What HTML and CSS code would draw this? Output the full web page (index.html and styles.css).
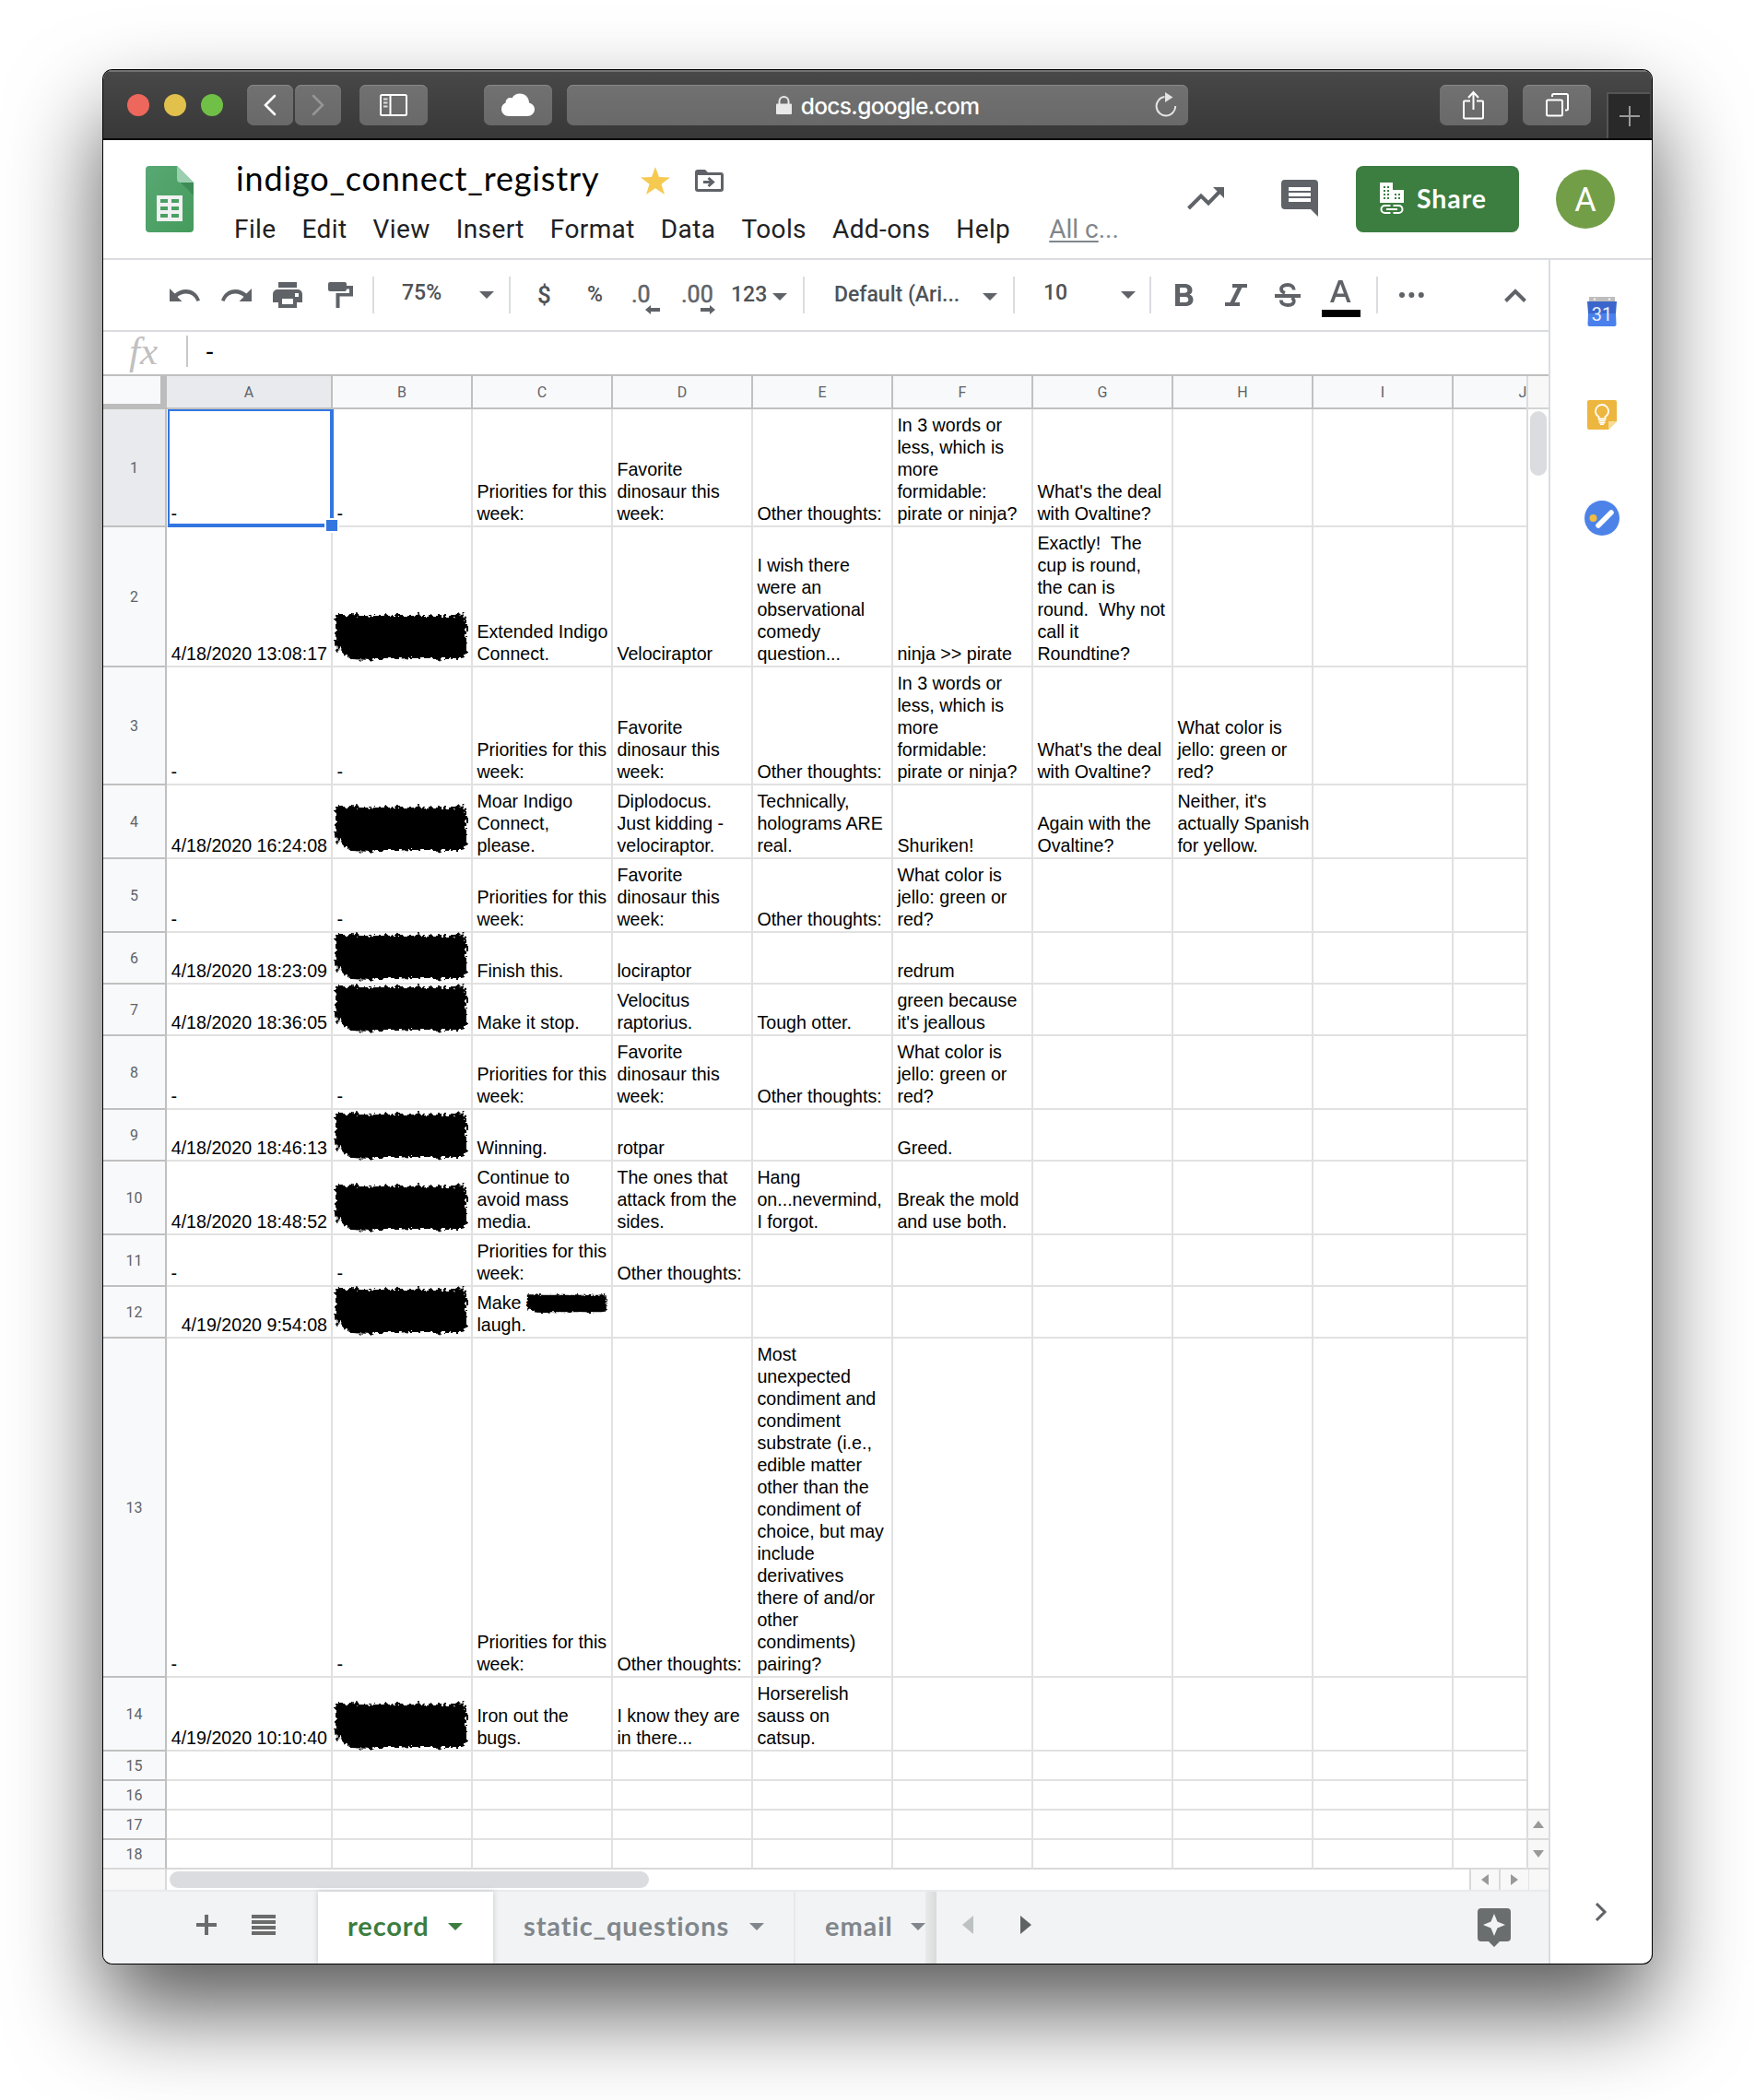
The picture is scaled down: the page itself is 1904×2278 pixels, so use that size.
FILE: index.html
```html
<!DOCTYPE html>
<html lang="en">
<head>
<meta charset="utf-8">
<title>indigo_connect_registry</title>
<link rel="stylesheet" href="styles.css">
</head>
<body>
<svg class="defs" width="0" height="0" aria-hidden="true">
  <defs>
    <filter id="rough" x="-5%" y="-15%" width="110%" height="130%">
      <feTurbulence type="fractalNoise" baseFrequency="0.22" numOctaves="2" seed="4" result="n"/>
      <feDisplacementMap in="SourceGraphic" in2="n" scale="9" xChannelSelector="R" yChannelSelector="G"/>
    </filter>
    <linearGradient id="leaf" x1="0" y1="0" x2="1" y2="1"><stop offset="0" stop-color="#58a873"/><stop offset="1" stop-color="#459b5c"/></linearGradient>
    <symbol id="scribble" viewBox="0 0 147 54">
      <path filter="url(#rough)" d="M3 3H21L25 1L29 4H54L59 2L62 4H88L92 2L96 4H132L143 1L141 7L145 5V47L140 50H118L114 52L108 50H84L80 52L74 50H46L42 52L20 51L12 46L10 41L7 39L4 47L3 30Z"/>
    </symbol>
  </defs>
</svg>
<div class="window">
  <div class="titlebar">
    <div class="lights"><i class="red"></i><i class="yellow"></i><i class="green"></i></div>
    <div class="tb nav"><svg width="50" height="44" viewBox="0 0 50 44"><path d="M30 12L20 22L30 32" fill="none" stroke="#fff" stroke-width="2.6" stroke-linecap="round"/></svg></div>
    <div class="tb nav next"><svg width="50" height="44" viewBox="0 0 50 44"><path d="M20 12L30 22L20 32" fill="none" stroke="#969696" stroke-width="2.6" stroke-linecap="round"/></svg></div>
    <div class="tb side"><svg width="30" height="24" viewBox="0 0 30 24" fill="none" stroke="#fff" stroke-width="2"><rect x="1" y="1" width="28" height="22" rx="1.5"/><path d="M11.5 1V23"/><path d="M4 5.5H8.500M4 9.500H8.500M4 13.500H8.500" stroke="#ddd"/></svg></div>
    <div class="tb cloud"><svg width="36" height="26" viewBox="0 0 36 26" fill="#fff"><path d="M8 25C3.500 25 0 21.800 0 17.500C0 14 2 11.500 4.600 10.500C4.200 7 8 3.800 11.500 5.600C13.200 2 16.300 0.500 20 0.500C25.500 0.500 30 4.500 30 10.500C33.500 11.500 36 14 36 17.500C36 21.800 32.500 25 28 25Z"/></svg></div>
    <div class="tb url"><svg class="lock" width="18" height="20" viewBox="0 0 18 20"><rect y="8.500" width="17" height="11.500" rx="1" fill="#e9e9e9"/><path d="M3.500 9V6A5 5 0 0 1 13.500 6V9" fill="none" stroke="#e9e9e9" stroke-width="2"/></svg><span>docs.google.com</span><svg class="reload" width="24" height="28" viewBox="0 0 24 28"><path d="M10.500 5A10.300 10.300 0 1 0 22.200 15" fill="none" stroke="#e4e4e4" stroke-width="2"/><path d="M11 0L19.500 5.500L11 11Z" fill="#e4e4e4"/></svg></div>
    <div class="tb act share-out"><svg width="24" height="32" viewBox="0 0 24 32" fill="none" stroke="#fff" stroke-width="2"><path d="M8 11.500H2A1 1 0 0 0 1 12.500V29.500A1 1 0 0 0 2 30.500H21A1 1 0 0 0 22 29.500V12.500A1 1 0 0 0 21 11.500H15M11.500 21V2M6 8L11.500 2L17 8"/></svg></div>
    <div class="tb act pages"><svg width="25" height="26" viewBox="0 0 25 26" fill="none" stroke="#fff" stroke-width="2"><rect x="1" y="7.500" width="17" height="17" rx="1.500"/><path d="M7 4V2.500A1.500 1.500 0 0 1 8.500 1H22.500A1.500 1.500 0 0 1 24 2.500V17A1.500 1.500 0 0 1 22.500 18.500H21"/></svg></div>
    <div class="newtab"><svg width="24" height="24" viewBox="0 0 24 24" stroke="#9a9a9a" stroke-width="2"><path d="M12 1V23M1 12H23"/></svg></div>
  </div>

  <header class="header">
    <svg class="logo" width="52" height="72" viewBox="0 0 52 72"><path d="M4 0H34L52 18V68A4 4 0 0 1 48 72H4A4 4 0 0 1 0 68V4A4 4 0 0 1 4 0Z" fill="url(#leaf)"/><path d="M38 18L52 32V18Z" fill="#3d8b56"/><path d="M34 0L52 18H38A4 4 0 0 1 34 14Z" fill="#9ccfb0"/><path d="M12 32H40V60H12Z" fill="#f1f1f1"/><path d="M16 36H24V40H16ZM28 36H36V40H28ZM16 44H24V48H16ZM28 44H36V48H28ZM16 52H24V56H16ZM28 52H36V56H28Z" fill="#4a9f64"/></svg>
    <div class="doc">
      <div class="name"><span class="doc-title">indigo_connect_registry</span>
        <svg class="star" width="32" height="30" viewBox="0 0 32 30"><path d="M16 0L20 11L32 11.400L22.500 18.800L26 30L16 23.200L6 30L9.500 18.800L0 11.400L12 11Z" fill="#f6ca51"/></svg>
        <svg class="move" width="31" height="24" viewBox="0 0 31 24"><path fill-rule="evenodd" d="M3 0H11L14 3H28A3 3 0 0 1 31 6V21A3 3 0 0 1 28 24H3A3 3 0 0 1 0 21V3A3 3 0 0 1 3 0ZM3 6V21H28V6Z" fill="#5f6368"/><path d="M9 13.500H18M14.500 9L19.500 13.500L14.500 18" fill="none" stroke="#5f6368" stroke-width="3"/></svg>
      </div>
      <nav class="menu"><span>File</span><span>Edit</span><span>View</span><span>Insert</span><span>Format</span><span>Data</span><span>Tools</span><span>Add-ons</span><span>Help</span><span class="saved"><u>All c</u>...</span></nav>
    </div>
    <svg class="trend" width="40" height="25" viewBox="0 0 40 25"><path d="M1.500 23L15 9.500L23 17.500L36 4" fill="none" stroke="#5f6368" stroke-width="4"/><path d="M28 0H40V12Z" fill="#5f6368"/></svg>
    <svg class="comment" width="40" height="40" viewBox="0 0 40 40"><path d="M4 0H36A4 4 0 0 1 40 4V40L32 32H4A4 4 0 0 1 0 28V4A4 4 0 0 1 4 0Z" fill="#5f6368"/><path d="M8 10H32M8 16H32M8 22H32" stroke="#fff" stroke-width="4"/></svg>
    <button class="share"><svg width="26" height="34" viewBox="0 0 26 34"><path fill-rule="evenodd" d="M0 0H14V8H26V22H0ZM4 4V6H6V4ZM8 4V6H10V4ZM4 8V10H6V8ZM8 8V10H10V8ZM4 12V14H6V12ZM8 12V14H10V12ZM4 16V18H6V16ZM8 16V18H10V16ZM16 12V14H18V12ZM20 12V14H22V12ZM16 16V18H18V16ZM20 16V18H22V16Z" fill="#fff"/><path d="M11.500 25H5.500A4 4 0 0 0 5.500 33H11.500M14.500 25H20.500A4 4 0 0 1 20.500 33H14.500M7 29H19" fill="none" stroke="#fff" stroke-width="2"/></svg><span>Share</span></button>
    <div class="avatar">A</div>
  </header>

  <div class="body">
    <main class="main">
      <div class="toolbar">
        <svg width="33" height="14" viewBox="0 0 33 14"><path d="M0 0V14H13.500L8.500 9C12 6 17 4.500 21.500 6C25.500 7.200 28 10 29.500 14L33 12.700C31 7 27 3 22 1.500C16 0 10 1.800 5.600 5.600Z" fill="#5f6368"/></svg>
        <svg width="33" height="14" viewBox="0 0 33 14"><path transform="translate(33 0) scale(-1 1)" d="M0 0V14H13.500L8.500 9C12 6 17 4.500 21.500 6C25.500 7.200 28 10 29.500 14L33 12.700C31 7 27 3 22 1.500C16 0 10 1.800 5.600 5.600Z" fill="#5f6368"/></svg>
        <svg width="32" height="28" viewBox="0 0 32 28"><path fill-rule="evenodd" d="M6 0H26V6H6ZM5 8H27A5 5 0 0 1 32 13V22H26V28H6V22H0V13A5 5 0 0 1 5 8ZM10 18V24H22V18ZM24 12V16H28V12Z" fill="#5f6368"/></svg>
        <svg width="27" height="28" viewBox="0 0 27 28"><path d="M2 0H18A2 2 0 0 1 20 2V4H27V15.500H12.500V28H8.500V12H23V7.500H20V8A2 2 0 0 1 18 10H2A2 2 0 0 1 0 8V2A2 2 0 0 1 2 0Z" fill="#5f6368"/></svg>
        <i class="sep"></i>
        <span class="t up">75%</span>
        <i class="caret"></i>
        <i class="sep"></i>
        <span class="t big">$</span>
        <span class="t">%</span>
        <span class="t dec">.0<svg width="16" height="10" viewBox="0 0 16 10"><path d="M6 0V3H16V7H6V10L0 5Z" fill="#5f6368"/></svg></span>
        <span class="t dec two">.00<svg width="16" height="10" viewBox="0 0 16 10"><path d="M10 0V3H0V7H10V10L16 5Z" fill="#5f6368"/></svg></span>
        <span class="t num">123</span>
        <i class="caret low"></i>
        <i class="sep"></i>
        <span class="t">Default (Ari...</span>
        <i class="caret low"></i>
        <i class="sep"></i>
        <span class="t up">10</span>
        <i class="caret"></i>
        <i class="sep"></i>
        <svg width="20" height="24" viewBox="0 0 20 24"><path fill-rule="evenodd" d="M0 0H10C15 0 18.500 2.500 18.500 6.700C18.500 9 17.500 10.800 15.500 11.600C18 12.500 19.500 14.500 19.500 17C19.500 21.500 16 24 11 24H0ZM5 4V9.700H10C12 9.700 13.300 8.600 13.300 6.900C13.300 5 12 4 10 4ZM5 14V20H11C13 20 14.300 18.900 14.300 17C14.300 15.200 13 14 11 14Z" fill="#5f6368"/></svg>
        <svg width="24" height="24" viewBox="0 0 24 24"><path d="M8 0H24V4H18.500L10.500 20H16V24H0V20H5.500L13.500 4H8Z" fill="#5f6368"/></svg>
        <svg width="28" height="26" viewBox="0 0 28 26"><path d="M0 12H28V16H0Z" fill="#5f6368"/><path d="M20.800 7.500C20.800 4 18 2 14 2C9.500 2 7 4 7 6.500C7 8.500 8.500 10 11 10.800M18.500 16C20 17 20.800 18 20.800 19.500C20.800 22.500 18 24 14 24C9.500 24 6.800 22 6.800 18.500" fill="none" stroke="#5f6368" stroke-width="3.800"/></svg>
        <svg class="color" width="42" height="40" viewBox="0 0 42 40"><path fill-rule="evenodd" d="M18 0H22.500L31.500 24H27.500L25.300 18H15.200L13 24H9ZM16.500 14.500H24L20.250 4Z" fill="#5f6368"/><path d="M0 32H42V40H0Z" fill="#000"/></svg>
        <i class="sep"></i>
        <svg width="27" height="6" viewBox="0 0 27 6" fill="#5f6368"><circle cx="3" cy="3" r="3"/><circle cx="13.400" cy="3" r="3"/><circle cx="23.800" cy="3" r="3"/></svg>
        <svg width="24" height="15" viewBox="0 0 24 15"><path d="M1.500 13.500L12 3L22.500 13.500" fill="none" stroke="#5f6368" stroke-width="4"/></svg>
      </div>
      <div class="formula"><em>fx</em><i></i><span>-</span></div>

      <div class="grid-area">
        <div class="sheet">
          <table>
            <colgroup><col class="rh"><col class="ca"><col><col><col><col><col><col><col><col><col></colgroup>
            <thead><tr><th class="corner"></th><th class="on">A</th><th>B</th><th>C</th><th>D</th><th>E</th><th>F</th><th>G</th><th>H</th><th>I</th><th>J</th></tr></thead>
            <tbody>
            <tr class="l5"><th class="on">1</th><td class="sel">-<i class="ring"></i><i class="handle"></i></td><td>-</td><td>Priorities for this
week:</td><td>Favorite
dinosaur this
week:</td><td>Other thoughts:</td><td>In 3 words or
less, which is
more
formidable:
pirate or ninja?</td><td>What's the deal
with Ovaltine?</td><td></td><td></td><td></td></tr>
            <tr class="l6"><th>2</th><td class="r">4/18/2020 13:08:17</td><td><svg class="ink b3"><use href="#scribble"/></svg></td><td>Extended Indigo
Connect.</td><td>Velociraptor</td><td>I wish there
were an
observational
comedy
question...</td><td>ninja &gt;&gt; pirate</td><td>Exactly!  The
cup is round,
the can is
round.  Why not
call it
Roundtine?</td><td></td><td></td><td></td></tr>
            <tr class="l5"><th>3</th><td>-</td><td>-</td><td>Priorities for this
week:</td><td>Favorite
dinosaur this
week:</td><td>Other thoughts:</td><td>In 3 words or
less, which is
more
formidable:
pirate or ninja?</td><td>What's the deal
with Ovaltine?</td><td>What color is
jello: green or
red?</td><td></td><td></td></tr>
            <tr class="l3"><th>4</th><td class="r">4/18/2020 16:24:08</td><td><svg class="ink b3"><use href="#scribble"/></svg></td><td>Moar Indigo
Connect,
please.</td><td>Diplodocus.
Just kidding -
velociraptor.</td><td>Technically,
holograms ARE
real.</td><td>Shuriken!</td><td>Again with the
Ovaltine?</td><td>Neither, it's
actually Spanish
for yellow.</td><td></td><td></td></tr>
            <tr class="l3"><th>5</th><td>-</td><td>-</td><td>Priorities for this
week:</td><td>Favorite
dinosaur this
week:</td><td>Other thoughts:</td><td>What color is
jello: green or
red?</td><td></td><td></td><td></td><td></td></tr>
            <tr class="l2"><th>6</th><td class="r">4/18/2020 18:23:09</td><td><svg class="ink"><use href="#scribble"/></svg></td><td>Finish this.</td><td>lociraptor</td><td></td><td>redrum</td><td></td><td></td><td></td><td></td></tr>
            <tr class="l2"><th>7</th><td class="r">4/18/2020 18:36:05</td><td><svg class="ink"><use href="#scribble"/></svg></td><td>Make it stop.</td><td>Velocitus
raptorius.</td><td>Tough otter.</td><td>green because
it's jeallous</td><td></td><td></td><td></td><td></td></tr>
            <tr class="l3"><th>8</th><td>-</td><td>-</td><td>Priorities for this
week:</td><td>Favorite
dinosaur this
week:</td><td>Other thoughts:</td><td>What color is
jello: green or
red?</td><td></td><td></td><td></td><td></td></tr>
            <tr class="l2"><th>9</th><td class="r">4/18/2020 18:46:13</td><td><svg class="ink drop"><use href="#scribble"/></svg></td><td>Winning.</td><td>rotpar</td><td></td><td>Greed.</td><td></td><td></td><td></td><td></td></tr>
            <tr class="l3"><th>10</th><td class="r">4/18/2020 18:48:52</td><td><svg class="ink"><use href="#scribble"/></svg></td><td>Continue to
avoid mass
media.</td><td>The ones that
attack from the
sides.</td><td>Hang
on...nevermind,
I forgot.</td><td>Break the mold
and use both.</td><td></td><td></td><td></td><td></td></tr>
            <tr class="l2"><th>11</th><td>-</td><td>-</td><td>Priorities for this
week:</td><td>Other thoughts:</td><td></td><td></td><td></td><td></td><td></td><td></td></tr>
            <tr class="l2"><th>12</th><td class="r">4/19/2020 9:54:08</td><td><svg class="ink"><use href="#scribble"/></svg></td><td>Make c<svg class="ink word" viewBox="0 0 147 54" preserveAspectRatio="none"><use href="#scribble"/></svg>
laugh.</td><td></td><td></td><td></td><td></td><td></td><td></td><td></td></tr>
            <tr class="l15"><th>13</th><td>-</td><td>-</td><td>Priorities for this
week:</td><td>Other thoughts:</td><td>Most
unexpected
condiment and
condiment
substrate (i.e.,
edible matter
other than the
condiment of
choice, but may
include
derivatives
there of and/or
other
condiments)
pairing?</td><td></td><td></td><td></td><td></td><td></td></tr>
            <tr class="l3"><th>14</th><td class="r">4/19/2020 10:10:40</td><td><svg class="ink drop"><use href="#scribble"/></svg></td><td>Iron out the
bugs.</td><td>I know they are
in there...</td><td>Horserelish
sauss on
catsup.</td><td></td><td></td><td></td><td></td><td></td></tr>
            <tr><th>15</th><td></td><td></td><td></td><td></td><td></td><td></td><td></td><td></td><td></td><td></td></tr>
            <tr><th>16</th><td></td><td></td><td></td><td></td><td></td><td></td><td></td><td></td><td></td><td></td></tr>
            <tr><th>17</th><td></td><td></td><td></td><td></td><td></td><td></td><td></td><td></td><td></td><td></td></tr>
            <tr class="last"><th>18</th><td></td><td></td><td></td><td></td><td></td><td></td><td></td><td></td><td></td><td></td></tr>
            </tbody>
          </table>
        </div>
        <div class="vscroll"><div class="vhead"></div><div class="vthumb"></div>
          <div class="vbtn push"><svg width="12" height="8" viewBox="0 0 12 8"><path d="M6 0L12 8H0Z"/></svg></div>
          <div class="vbtn"><svg width="12" height="8" viewBox="0 0 12 8"><path d="M0 0H12L6 8Z"/></svg></div>
        </div>
      </div>
      <div class="hscroll"><div class="hcorner"></div><div class="hthumb"></div>
        <div class="hbtn push"><svg width="8" height="12" viewBox="0 0 8 12"><path d="M8 0V12L0 6Z"/></svg></div>
        <div class="hbtn"><svg width="8" height="12" viewBox="0 0 8 12"><path d="M0 0V12L8 6Z"/></svg></div>
        <div class="hend"></div>
      </div>
      <footer class="tabs">
        <div class="sheet-tools"><svg width="22" height="22" viewBox="0 0 22 22"><path d="M11 0V22M0 11H22" stroke="#6b6b6b" stroke-width="4"/></svg><svg width="26" height="24" viewBox="0 0 26 24"><path d="M0 3H26M0 9H26M0 15H26M0 21H26" stroke="#6b6b6b" stroke-width="4"/></svg></div>
        <div class="tab active"><span>record</span><i class="caret"></i></div>
        <div class="tab second"><span>static_questions</span><i class="caret"></i></div>
        <div class="tab third"><span>email</span><i class="caret"></i></div>
        <div class="fade"></div>
        <svg class="prev" width="12" height="20" viewBox="0 0 12 20"><path d="M12 0V20L0 10Z" fill="#bdc1c3"/></svg>
        <svg class="nxt" width="12" height="20" viewBox="0 0 12 20"><path d="M0 0V20L12 10Z" fill="#606363"/></svg>
        <svg class="explore" width="36" height="42" viewBox="0 0 36 42"><path d="M4 0H32A4 4 0 0 1 36 4V32A4 4 0 0 1 32 36H24L18 42L12 36H4A4 4 0 0 1 0 32V4A4 4 0 0 1 4 0Z" fill="#6b6e6e"/><path d="M18 6L21.500 14.500L30 18L21.500 21.500L18 30L14.500 21.500L6 18L14.500 14.500Z" fill="#f1f3f4"/></svg>
      </footer>
    </main>
    <aside class="panel">
      <svg class="cal" width="32" height="32" viewBox="0 0 32 32"><path d="M2 0H30V6H2Z" fill="#bdbdbd"/><circle cx="8" cy="2.500" r="1.300" fill="#eee"/><circle cx="24" cy="2.500" r="1.300" fill="#eee"/><path d="M0 5H32L31 18H1Z" fill="#3a66cb"/><path d="M1 18H31L31.500 30A2 2 0 0 1 29.500 32H2.500A2 2 0 0 1 .5 30Z" fill="#4a80ec"/><text x="16" y="25.500" text-anchor="middle">31</text></svg>
      <svg class="keep" width="32" height="32" viewBox="0 0 32 32"><path d="M2 0H30A2 2 0 0 1 32 2V23L23 32H2A2 2 0 0 1 0 30V2A2 2 0 0 1 2 0Z" fill="#edb63f"/><path d="M32 23L23 32V23Z" fill="#f8dc94"/><path d="M12.500 20.500V18C10 16.500 9 14.500 9 12A7 7 0 0 1 23 12C23 14.500 22 16.500 19.500 18V20.500Z" fill="none" stroke="#fff" stroke-width="1.800"/><path d="M12.500 22.500H19.500M12.500 24.500H19.500M14 26.200H18" stroke="#fff" stroke-width="1.500"/></svg>
      <svg class="tasks" width="38" height="38" viewBox="0 0 38 38"><circle cx="19" cy="19" r="19" fill="#4d83e8"/><circle cx="9.500" cy="19" r="4" fill="#f1bc42"/><path d="M15 27L29 13" stroke="#fff" stroke-width="5.500" stroke-linecap="round"/></svg>
      <svg class="chev" width="14" height="20" viewBox="0 0 14 20"><path d="M2 1L11 10L2 19" fill="none" stroke="#5f6368" stroke-width="3"/></svg>
    </aside>
  </div>
</div>
</body>
</html>
```
FILE: styles.css
```css
* { box-sizing: border-box; }
html, body { margin: 0; background: #fff; }
body { padding: 76px 112px 0; width: 1904px; height: 2278px; overflow: hidden; font-family: Roboto, sans-serif; }
svg { display: block; flex: none; }
.defs { position: absolute; }
.window { width: 1680px; height: 2054px; border-radius: 10px; background: #fff; overflow: hidden; display: flex; flex-direction: column;
  box-shadow: 0 0 0 1px #000, 0 50px 100px rgba(0,0,0,.66); }

/* browser chrome */
.titlebar { height: 76px; flex: none; display: flex; align-items: flex-start; padding: 14px 0 0 26px; background: linear-gradient(#484848, #383838); border-bottom: 2px solid #060606; box-shadow: inset 0 2px #727272; }
.lights { display: flex; gap: 16px; padding-top: 12px; width: 130px; flex: none; }
.lights i { width: 24px; height: 24px; border-radius: 50%; }
.red { background: #ee675c; }
.yellow { background: #e1c04c; }
.green { background: #70bf47; }
.tb { height: 44px; margin-top: 2px; flex: none; border-radius: 7px; background: linear-gradient(#717171, #696969); box-shadow: inset 0 1px #888; display: flex; align-items: center; justify-content: center; }
.nav { width: 50px; }
.next { margin-left: 2px; }
.side { width: 74px; margin-left: 20px; }
.cloud { width: 74px; margin-left: 61px; }
.url { width: 674px; margin-left: 16px; color: #fff; font: 500 24.5px Inter, sans-serif; letter-spacing: -.65px; gap: 9px; position: relative; }
.url span { padding-top: 2px; }
.reload { position: absolute; right: 12px; top: 8px; }
.act { width: 74px; }
.share-out { margin-left: 273px; }
.pages { margin-left: 16px; }
.newtab { margin: 10px 2px 0 17px; width: 47px; height: 50px; background: #292929; border: 2px solid #555; border-width: 2px 0 0 2px; display: flex; align-items: center; justify-content: center; }

/* document header */
.header { height: 130px; flex: none; display: flex; padding-left: 46px; border-bottom: 2px solid #dadce0; }
.logo { margin-top: 28px; }
.doc { width: 1078px; padding: 16px 0 0 44px; flex: none; }
.name { display: flex; height: 50px; }
.doc-title { font: 400 36px/50px Lato, sans-serif; width: 441px; padding-left: 2px; letter-spacing: .85px; color: #000; }
.star { margin-top: 13px; }
.move { margin: 16px 0 0 27px; }
.menu { display: flex; gap: 28px; font-size: 28px; line-height: 34px; margin-top: 14px; color: #202124; letter-spacing: .4px; white-space: nowrap; }
.saved { color: #80868b; padding-left: 14px; letter-spacing: 0; }
.saved u { text-decoration-thickness: 2px; text-underline-offset: 3px; }
.trend { margin-top: 51px; }
.comment { margin: 43px 0 0 62px; }
.share { margin: 28px 0 0 41px; width: 177px; height: 72px; border: 0; border-radius: 8px; background: #3c7d40; color: #fff; display: flex; align-items: center; padding: 0 0 2px 26px; gap: 14px; font: 700 28.5px Lato, sans-serif; letter-spacing: .9px; flex: none; }
.avatar { margin: 32px 0 0 40px; width: 64px; height: 64px; border-radius: 50%; background: #739e48; color: #fff; font-size: 36px; line-height: 66px; text-align: center; flex: none; }

.body { display: flex; flex: 1; min-height: 0; }
.main { width: 1568px; flex: none; display: flex; flex-direction: column; }
.panel { width: 112px; border-left: 2px solid #dadce0; display: flex; flex-direction: column; align-items: center; }
.cal { margin: 40px 0 0 1px; }
.cal text { font: 20px Roboto, sans-serif; fill: #e8eefb; }
.keep { margin: 80px 0 0 1px; }
.tasks { margin: 77px 0 0 1px; }
.chev { margin: auto 0 46px -1px; }

/* toolbar */
.toolbar { height: 78px; flex: none; border-bottom: 2px solid #dadce0; padding: 0 0 0 72px; display: grid; align-items: center; white-space: nowrap;
  grid-template-columns: 56px 56px 60px 48px 32px 84px 32px 31px 54px 48px 54px 54px 45px 33px 34px 161px 33px 33px 84px 31px 28px 54px 54px 51px 59px 25px 114px 30px; }
.sep { width: 2px; height: 40px; background: #dadce0; }
.caret { width: 16px; height: 8px; background: #5f6368; clip-path: polygon(0 0, 100% 0, 50% 100%); flex: none; }
.low { position: relative; top: 2px; }
.t { font-weight: 500; font-size: 23px; line-height: 28px; color: #4f5256; }
.up { margin-top: -5px; }
.big { font-size: 26px; }
.dec { position: relative; font-size: 25px; font-weight: 400; -webkit-text-stroke: .5px #5f6368; color: #5f6368; }
.dec svg { position: absolute; left: 15px; top: 25px; }
.two svg { left: 21px; }
.color { margin-top: 8px; }
.formula { height: 48px; flex: none; display: flex; align-items: center; padding: 0 0 4px 28px; border-bottom: 2px solid #bfbfbf; }
.formula em { font: italic 43px/40px "Liberation Serif", serif; color: #c0c0c0; width: 62px; }
.formula i { width: 2px; height: 34px; background: #c8c8c8; }
.formula span { font: 27px/40px "Liberation Sans", sans-serif; padding-left: 19px; }

/* sheet */
.grid-area { display: flex; height: 1620px; flex: none; }
.sheet { width: 1544px; overflow: hidden; flex: none; }
table { table-layout: fixed; width: 1617px; border-collapse: separate; border-spacing: 0; }
col { width: 152px; }
.rh { width: 69px; }
.ca { width: 180px; }
th { padding: 2px 0 0; background: #f8f9fa; border: 0 solid #c0c0c0; border-width: 0 2px 2px 0; font-weight: 400; font-size: 16px; line-height: 18px; color: #5f6368; }
thead tr { height: 36px; }
.on { background: #e8eaed; }
.corner { border-width: 0 7px 6px 0; border-color: #bcbcbc; }
tbody tr { height: 32px; }
tbody .l2 { height: 56px; }
tbody .l3 { height: 80px; }
tbody .l5 { height: 128px; }
tbody .l6 { height: 152px; }
tbody .l15 { height: 368px; }
td { position: relative; padding: 0 0 1px 4.4px; vertical-align: bottom; white-space: pre; border: 0 solid #e1e1e1; border-width: 0 2px 2px 0; font: 19.65px/24px "Liberation Sans", Arial, sans-serif; color: #000; }
.r { text-align: right; padding-right: 4px; }
.last > * { border-bottom-color: #d9d9d9; }
.ring { position: absolute; z-index: 1; left: 1px; top: 0; right: -3px; bottom: -2px; border: 2px solid #3276e0; border-width: 2px 4px 4px 2px; }
.handle { position: absolute; z-index: 2; right: -9px; bottom: -8px; width: 16px; height: 16px; background: #3276e0; border: 2px solid #fff; }
.ink { position: absolute; left: 0; bottom: 1px; width: 147px; height: 54px; overflow: visible; z-index: 1; }
.b3 { bottom: 4px; }
.drop { bottom: -1px; }
.word { left: 57px; bottom: 25px; width: 89px; height: 22px; }

/* scrollbars */
.vscroll { width: 24px; border-left: 2px solid #dcdcdc; display: flex; flex-direction: column; align-items: stretch; }
.vhead { height: 36px; background: #f8f8f8; border-bottom: 2px solid #d4d4d4; }
.vthumb { width: 18px; height: 70px; border-radius: 9px; background: #dadce0; margin: 2px 0 0 2px; }
.vbtn { height: 32px; background: #f8f8f8; border-bottom: 2px solid #d9d9d9; display: flex; align-items: center; justify-content: center; fill: #999; }
.vbtn.push { margin-top: auto; height: 34px; border-top: 2px solid #d9d9d9; }
.hscroll { height: 24px; flex: none; border-bottom: 2px solid #e8eaed; display: flex; }
.hcorner { width: 69px; background: #f8f8f8; border-right: 2px solid #d9d9d9; }
.hthumb { width: 520px; height: 18px; border-radius: 9px; background: #dadce0; margin: 2px 0 0 3px; }
.hbtn { width: 32px; background: #f8f8f8; border-left: 2px solid #d9d9d9; display: flex; align-items: center; justify-content: center; fill: #999; }
.push { margin-left: auto; }
.vbtn.push { margin-left: 0; }
.hend { width: 22px; background: #f8f8f8; border-left: 1px solid #e4e4e4; }

/* sheet tabs */
.tabs { flex: 1; background: #f1f3f4; display: flex; align-items: center; padding-bottom: 6px; }
.tabs > * { flex: none; }
.sheet-tools { display: flex; align-items: center; gap: 38px; width: 233px; padding-left: 101px; }
.tab { height: 78px; margin-bottom: -6px; display: flex; align-items: center; padding-bottom: 2px; font: 700 29px/34px Lato, sans-serif; color: #80868b; letter-spacing: .9px; }
.tab span { padding-bottom: 2px; }
.tab .caret { background: #80868b; margin-left: auto; }
.active { width: 190px; padding-left: 32px; padding-right: 33px; background: #fff; color: #3c7d40; box-shadow: 0 0 6px rgba(60,64,67,.25); }
.active .caret { background: #3c7d40; }
.second { width: 328px; padding: 0 32px 2px 33px; border-right: 2px solid #e6e8ea; }
.third { width: 141px; padding-left: 32px; }
.fade { width: 12px; height: 78px; margin-bottom: -6px; background: linear-gradient(90deg, #e9ebeb, #d9dbdb); }
.prev { margin-left: 28px; }
.nxt { margin-left: 51px; }
.explore { margin: 6px 41px 0 auto; }
```
